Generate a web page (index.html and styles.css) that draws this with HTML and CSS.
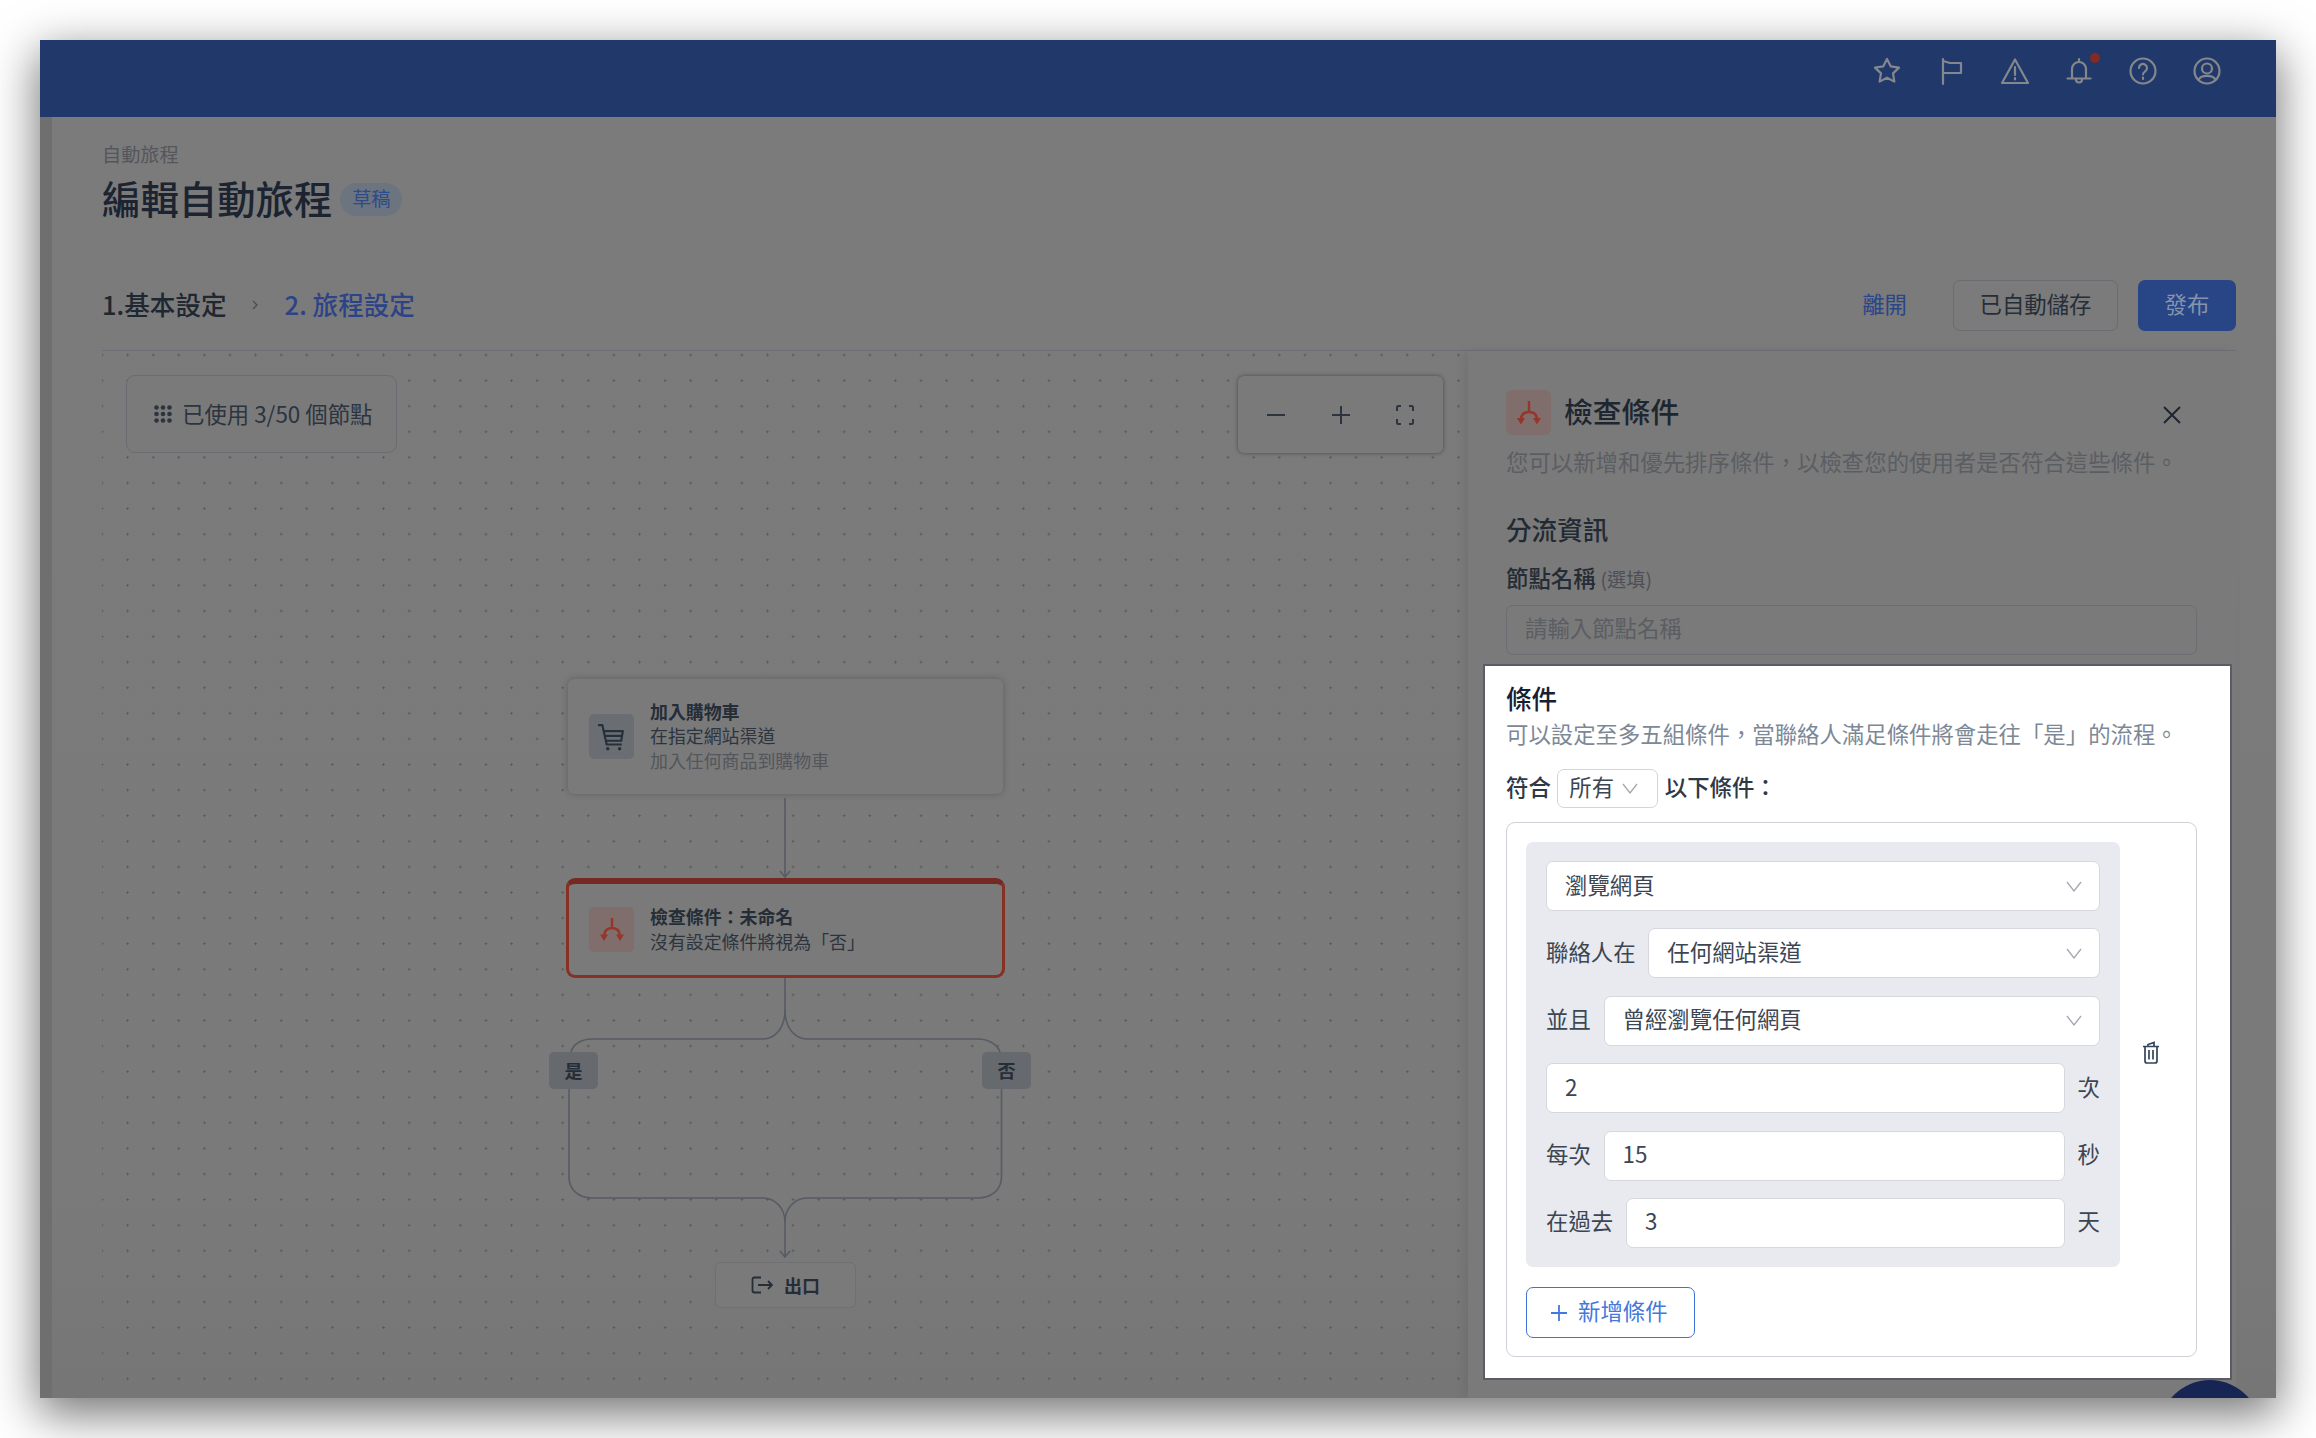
FILE: index.html
```html
<!DOCTYPE html>
<html lang="zh-Hant">
<head>
<meta charset="utf-8">
<title>編輯自動旅程</title>
<link rel="stylesheet" href="styles.css">
</head>
<body>
<div class="window">
  <header class="topbar">
    <svg class="tb-icon" viewBox="0 0 30 30"><path d="M15 3l3.800 7.400 8.200 1.200-6 5.800 1.400 8.200-7.400-3.900-7.400 3.900L9 17.400l-6-5.800 8.200-1.200z"/></svg>
    <svg class="tb-icon" viewBox="0 0 30 30"><path d="M7 3v25M7 5l7 2h11v10H7"/></svg>
    <svg class="tb-icon" viewBox="0 0 30 30"><path d="M15 3.500L28 27H2zM15 11v8M15 22v1.500"/></svg>
    <span class="tb-bell">
      <svg class="tb-icon" viewBox="0 0 30 30"><path d="M8 22v-9a7 7 0 0 1 14 0v9M3.500 22.500h23M15 3v3M12 23.500a3 3 0 0 0 6 0"/></svg>
      <span class="tb-dot"></span>
    </span>
    <svg class="tb-icon" viewBox="0 0 30 30"><circle cx="15" cy="15" r="12.500"/><path d="M11 12a4 4 0 1 1 6.200 3.300c-1.400.9-2.200 1.800-2.200 3.200M15 21.500v1.500"/></svg>
    <svg class="tb-icon" viewBox="0 0 30 30"><circle cx="15" cy="15" r="12.500"/><circle cx="15" cy="12.500" r="5"/><path d="M6.500 24c2-5.500 15-5.500 17 0"/></svg>
  </header>

  <div class="body">
    <div class="sliver"></div>
    <main class="content">
      <div class="crumb">自動旅程</div>
      <div class="title-row">
        <h1 class="title">編輯自動旅程</h1>
        <span class="badge">草稿</span>
      </div>
      <div class="steps-row">
        <div class="steps">
          <span class="step-done">1.基本設定</span>
          <svg class="step-sep" viewBox="0 0 8 12"><path d="M2 2l4 4-4 4"/></svg>
          <span class="step-now">2. 旅程設定</span>
        </div>
        <div class="actions">
          <span class="leave">離開</span>
          <span class="btn-saved">已自動儲存</span>
          <span class="btn-publish">發布</span>
        </div>
      </div>

      <div class="workspace">
        <section class="canvas">
          <svg class="edges" viewBox="102 351 1366 1047">
            <path d="M785 798V876M780 871l5 6 5-6"/>
            <path d="M785 977v33c0 18-10 29-22 29H592c-10 0-19 5-21 13"/>
            <path d="M785 1010c0 18 10 29 22 29h171c10 0 19 5 22 13"/>
            <path d="M569 1089v88c0 13 10 21 23 21h171c12 0 22 10 22 24v35M780 1251l5 6 5-6"/>
            <path d="M1001.500 1089v88c0 13-10.500 21-23.500 21H807c-12 0-22 10-22 24"/>
          </svg>

          <div class="counter">
            <svg class="grid-ic" viewBox="0 0 18 18"><circle cx="2.500" cy="2.500" r="2.300"/><circle cx="9" cy="2.500" r="2.300"/><circle cx="15.500" cy="2.500" r="2.300"/><circle cx="2.500" cy="9" r="2.300"/><circle cx="9" cy="9" r="2.300"/><circle cx="15.500" cy="9" r="2.300"/><circle cx="2.500" cy="15.500" r="2.300"/><circle cx="9" cy="15.500" r="2.300"/><circle cx="15.500" cy="15.500" r="2.300"/></svg>
            <span>已使用 3/50 個節點</span>
          </div>

          <div class="zoombox">
            <svg class="zoom-ic" viewBox="0 0 20 20"><path d="M1 10h18"/></svg>
            <svg class="zoom-ic" viewBox="0 0 20 20"><path d="M1 10h18M10 1v18"/></svg>
            <svg class="zoom-ic" viewBox="0 0 20 20"><path d="M2 6V2.500Q2 1 3.500 1H6M14 1h2.500Q18 1 18 2.500V6M18 14v3.500q0 1.500-1.500 1.500H14M6 19H3.500Q2 19 2 17.500V14"/></svg>
          </div>

          <div class="node node-cart">
            <span class="node-ic ic-gray">
              <svg class="cart-ic" viewBox="0 0 26 26"><path d="M1 2h4l4 18h14M6.500 7.500H24l-1.500 9H8.500M8 12h15.500"/><circle cx="10" cy="24" r="1.600"/><circle cx="21" cy="24" r="1.600"/></svg>
            </span>
            <div class="node-text">
              <div class="node-name">加入購物車</div>
              <div class="node-line">在指定網站渠道</div>
              <div class="node-muted">加入任何商品到購物車</div>
            </div>
          </div>

          <div class="node node-check">
            <span class="node-ic ic-red">
              <svg class="split-ic" viewBox="0 0 26 26"><path class="split-line" d="M13 1v10M13 11c-5 0-8 3-8 9M13 11c5 0 8 3 8 9"/><path class="split-head" d="M1 17.500h8l-4 6.500zM17 17.500h8l-4 6.500z"/></svg>
            </span>
            <div class="node-text">
              <div class="node-name">檢查條件：未命名</div>
              <div class="node-line">沒有設定條件將視為「否」</div>
            </div>
          </div>

          <span class="branch branch-yes">是</span>
          <span class="branch branch-no">否</span>

          <div class="exit-node">
            <svg class="exit-ic" viewBox="0 0 22 18"><path d="M10 1.500H3.500q-2 0-2 2v11q0 2 2 2H10M7 9h14M17 5l4 4-4 4"/></svg>
            <span>出口</span>
          </div>
        </section>

        <aside class="panel">
          <div class="panel-head">
            <div class="panel-title-wrap">
              <span class="panel-ic">
                <svg class="split-ic" viewBox="0 0 26 26"><path class="split-line" d="M13 1v11M13 12c-5 0-8 3-8 8M13 12c5 0 8 3 8 8"/><path class="split-head" d="M1 18h8l-4 6.500zM17 18h8l-4 6.500z"/></svg>
              </span>
              <h2 class="panel-title">檢查條件</h2>
            </div>
            <svg class="close-ic" viewBox="0 0 20 20"><path d="M2 2l16 16M18 2L2 18"/></svg>
          </div>
          <p class="panel-desc">您可以新增和優先排序條件，以檢查您的使用者是否符合這些條件。</p>
          <h3 class="panel-sub">分流資訊</h3>
          <div class="panel-label">節點名稱 <span class="optional">(選填)</span></div>
          <div class="name-input">請輸入節點名稱</div>

          <section class="focus">
            <h3 class="focus-title">條件</h3>
            <p class="focus-desc">可以設定至多五組條件，當聯絡人滿足條件將會走往「是」的流程。</p>
            <div class="match-row">
              <span class="match-text">符合</span>
              <span class="match-select">所有
                <svg class="chev" viewBox="0 0 16 11"><path d="M1 1l7 9 7-9"/></svg>
              </span>
              <span class="match-text">以下條件：</span>
            </div>
            <div class="rules">
              <div class="rule-line">
                <div class="group">
                  <div class="row">
                    <div class="field">瀏覽網頁<svg class="chev" viewBox="0 0 16 11"><path d="M1 1l7 9 7-9"/></svg></div>
                  </div>
                  <div class="row">
                    <span class="lab">聯絡人在</span>
                    <div class="field">任何網站渠道<svg class="chev" viewBox="0 0 16 11"><path d="M1 1l7 9 7-9"/></svg></div>
                  </div>
                  <div class="row">
                    <span class="lab">並且</span>
                    <div class="field">曾經瀏覽任何網頁<svg class="chev" viewBox="0 0 16 11"><path d="M1 1l7 9 7-9"/></svg></div>
                  </div>
                  <div class="row">
                    <div class="field">2</div>
                    <span class="lab">次</span>
                  </div>
                  <div class="row">
                    <span class="lab">每次</span>
                    <div class="field">15</div>
                    <span class="lab">秒</span>
                  </div>
                  <div class="row">
                    <span class="lab">在過去</span>
                    <div class="field">3</div>
                    <span class="lab">天</span>
                  </div>
                </div>
                <div class="trash-col">
                  <svg class="trash-ic" viewBox="0 0 18 23"><path d="M1 5.500h16M6 5.500V3.500L12 1.500v4M3 5.500V20q0 2 2 2h8q2 0 2-2V5.500M7 9v9.500M11 9v9.500"/></svg>
                </div>
              </div>
              <div class="add-btn">
                <svg class="plus-ic" viewBox="0 0 18 18"><path d="M1 9h16M9 1v16"/></svg>
                <span class="add-text">新增條件</span>
              </div>
            </div>
          </section>
        </aside>
      </div>
    </main>
  </div>
  <span class="fab"></span>
</div>
</body>
</html>
```
FILE: styles.css
```css
* { box-sizing: border-box; }
html, body { margin: 0; padding: 0; background: #fff; }
body {
  width: 2316px;
  height: 1438px;
  padding: 40px;
  overflow: hidden;
  font-family: "Noto Sans CJK TC", "Noto Sans", sans-serif;
  color: #2a323d;
}
h1, h2, h3, p { margin: 0; font-weight: 500; }

.window {
  position: relative;
  width: 2236px;
  height: 1358px;
  display: flex;
  flex-direction: column;
  overflow: hidden;
  background: linear-gradient(#7b7b7b, #7a7a7a 85%, #767676);
  box-shadow: 0 14px 44px 2px rgba(0, 0, 0, .55);
}

.topbar {
  flex: none;
  height: 77px;
  padding: 16px 54px 0 0;
  display: flex;
  justify-content: flex-end;
  align-items: flex-start;
  gap: 34px;
  background: #21386b;
}
.tb-icon {
  display: block;
  width: 30px;
  height: 30px;
  fill: none;
  stroke: #84878c;
  stroke-width: 2.200;
  stroke-linecap: round;
  stroke-linejoin: round;
}
.tb-bell { position: relative; display: block; }
.tb-dot {
  position: absolute;
  left: 26px;
  top: -3px;
  width: 10px;
  height: 10px;
  border-radius: 50%;
  background: #842a22;
}

.body { flex: 1; display: flex; min-height: 0; }
.sliver { flex: none; width: 12px; background: #6f6f6f; }
.content {
  flex: 1;
  min-width: 0;
  display: flex;
  flex-direction: column;
  padding: 24px 40px 0 50px;
}

.crumb { font-size: 19.200px; line-height: 26px; color: #53565a; }
.title-row { margin-top: 7px; height: 50px; display: flex; align-items: center; gap: 8px; }
.title { padding-bottom: 4px; font-size: 38.400px; line-height: 50px; color: #1b2430; }
.badge {
  width: 62px;
  height: 33px;
  border-radius: 17px;
  background: #6c7480;
  color: #2c4a8d;
  font-size: 19.200px;
  line-height: 31px;
  text-align: center;
}

.steps-row {
  flex: none;
  margin-top: 56px;
  height: 71px;
  padding-bottom: 19px;
  display: flex;
  justify-content: space-between;
  align-items: stretch;
  border-bottom: 1.500px solid #6c6f75;
}
.steps { display: flex; align-items: center; padding-bottom: 5px; font-size: 25.600px; font-weight: 500; }
.step-done { color: #1f2731; }
.step-sep { width: 8px; height: 12px; margin: 3px 26px 0 24px; fill: none; stroke: #4a4d52; stroke-width: 1.300; }
.step-now { color: #2c4487; }
.actions { display: flex; align-items: center; font-size: 22.400px; }
.leave { color: #2a4689; margin: 0 46px 5px 0; }
.btn-saved {
  width: 165px;
  height: 51px;
  margin-right: 20px;
  border: 1.500px solid #696c71;
  border-radius: 7px;
  color: #262e38;
  line-height: 44px;
  text-align: center;
}
.btn-publish {
  width: 98px;
  height: 51px;
  border-radius: 7px;
  background: #284585;
  color: #8793ad;
  line-height: 46px;
  text-align: center;
}

.workspace { flex: 1; min-height: 0; display: flex; }

.canvas {
  position: relative;
  flex: none;
  width: 1366px;
  background-image: radial-gradient(circle at 1.500px 1.500px, #585858 .9px, transparent 1.300px);
  background-size: 25.600px 25.600px;
  background-position: -1.500px 2.500px;
}
.edges {
  position: absolute;
  left: 0;
  top: 0;
  width: 1366px;
  height: 1047px;
  fill: none;
  stroke: #575b63;
  stroke-width: 1.600;
}
.counter {
  position: absolute;
  left: 24px;
  top: 24px;
  width: 271px;
  height: 78px;
  padding: 0 0 3px 27px;
  display: flex;
  align-items: center;
  gap: 10px;
  border: 1.500px solid #696c71;
  border-radius: 9px;
  background: #7a7a7a;
  font-size: 22.400px;
  color: #2c343f;
}
.grid-ic { width: 18px; height: 18px; margin-top: 3px; fill: #2c343f; }
.zoombox {
  position: absolute;
  left: 1136px;
  top: 25px;
  width: 205px;
  height: 77px;
  padding: 0 28px;
  display: flex;
  align-items: center;
  justify-content: space-between;
  border-radius: 6px;
  background: #7a7a7a;
  box-shadow: 0 0 4px rgba(0, 0, 0, .4);
}
.zoom-ic { width: 20px; height: 20px; fill: none; stroke: #2c343f; stroke-width: 2; }

.node {
  position: absolute;
  display: flex;
  align-items: center;
  gap: 16px;
  background: #7a7a7a;
}
.node-cart {
  left: 466px;
  top: 328px;
  width: 435px;
  height: 115px;
  padding-left: 21px;
  border-radius: 6px;
  box-shadow: 0 0 7px rgba(0, 0, 0, .22);
}
.node-check {
  left: 464px;
  top: 527px;
  width: 439px;
  height: 100px;
  padding-left: 20px;
  border: 3px solid #863026;
  border-top: 6px solid #742a22;
  border-radius: 9px;
}
.node-ic { flex: none; width: 45px; height: 45px; display: flex; align-items: center; justify-content: center; border-radius: 5px; }
.ic-gray { background: #6a6e73; }
.ic-red { background: #7f6e6b; }
.cart-ic { width: 28px; height: 28px; margin-right: 2px; fill: none; stroke: #26303b; stroke-width: 2; stroke-linejoin: round; }
.cart-ic circle { fill: #26303b; stroke: none; }
.split-ic { width: 26px; height: 26px; }
.split-line { fill: none; stroke: #96352a; stroke-width: 2.400; }
.split-head { fill: #96352a; }
.node-text { padding-bottom: 2px; font-size: 17.920px; line-height: 24.500px; color: #2d343e; }
.node-name { font-weight: 700; color: #252d37; }
.node-muted { color: #53565a; }

.branch {
  position: absolute;
  top: 701px;
  width: 49px;
  height: 37px;
  border-radius: 5px;
  background: #66696d;
  color: #252d37;
  font-size: 18px;
  font-weight: 700;
  line-height: 37px;
  text-align: center;
}
.branch-yes { left: 447px; }
.branch-no { left: 880px; }

.exit-node {
  position: absolute;
  left: 613px;
  top: 911px;
  width: 141px;
  height: 46px;
  display: flex;
  align-items: center;
  justify-content: center;
  gap: 11px;
  border: 1.500px solid #6e7074;
  border-radius: 6px;
  background: #7a7a7a;
  font-size: 18px;
  font-weight: 700;
  color: #252d37;
}
.exit-ic { width: 22px; height: 18px; fill: none; stroke: #252d37; stroke-width: 1.800; }

.panel {
  flex: 1;
  min-width: 0;
  padding: 39px 0 0 38px;
  background: #7a7a7a;
  box-shadow: -4px 0 10px rgba(0, 0, 0, .07);
  z-index: 1;
}
.panel-head { width: 691px; height: 45px; padding-right: 15px; display: flex; align-items: center; justify-content: space-between; }
.panel-title-wrap { display: flex; align-items: center; gap: 13px; }
.panel-ic { width: 45px; height: 45px; display: flex; align-items: center; justify-content: center; border-radius: 6px; background: #7f6e6b; }
.panel-title { padding-bottom: 3px; font-size: 28.800px; line-height: 40px; color: #1e2630; }
.close-ic { width: 20px; height: 20px; margin-top: 4px; fill: none; stroke: #1e2630; stroke-width: 2; }
.panel-desc { margin-top: 11px; font-size: 22.400px; font-weight: 400; line-height: 30px; color: #5a5e63; white-space: nowrap; }
.panel-sub { margin-top: 36px; font-size: 25.600px; line-height: 34px; color: #222a34; }
.panel-label { margin-top: 16px; font-size: 22.400px; font-weight: 500; line-height: 30px; color: #252c36; }
.optional { font-size: 19.200px; font-weight: 400; color: #4c5056; }
.name-input {
  width: 691px;
  height: 50px;
  margin-top: 11px;
  padding-left: 18px;
  border: 1.500px solid #6a6d72;
  border-radius: 7px;
  font-size: 22.400px;
  line-height: 42px;
  color: #5a5e63;
}

.focus {
  width: 745px;
  height: 712px;
  margin: 11px 0 0 -21px;
  padding: 15px 34px 0 21px;
  background: #fff;
  box-shadow: 0 0 0 2px #5b5d66;
}
.focus-title { font-size: 25.600px; line-height: 34px; color: #172033; }
.focus-desc { margin-top: 3px; font-size: 22.400px; font-weight: 400; line-height: 30px; color: #7d8896; white-space: nowrap; }
.match-row { margin-top: 21px; height: 39px; display: flex; align-items: center; gap: 6.500px; font-size: 22.400px; font-weight: 500; color: #2e3846; }
.match-text { padding-bottom: 5px; }
.match-select {
  width: 101px;
  height: 39px;
  padding: 0 19px 5px 11px;
  display: flex;
  align-items: center;
  justify-content: space-between;
  border: 1.500px solid #d2d5da;
  border-radius: 7px;
  font-weight: 400;
  color: #3c4653;
}
.chev { flex: none; width: 16px; height: 11px; margin-top: 5px; fill: none; stroke: #a3a8b0; stroke-width: 1.300; }

.rules {
  width: 691px;
  height: 535px;
  margin-top: 14px;
  padding: 19px 0 0 19px;
  border: 1.500px solid #ced1d6;
  border-radius: 9px;
}
.rule-line { display: flex; }
.group {
  flex: none;
  width: 594px;
  height: 425px;
  padding: 19px 20px;
  display: flex;
  flex-direction: column;
  gap: 17.400px;
  border-radius: 7px;
  background: #e8eaef;
}
.row { height: 50px; display: flex; align-items: center; gap: 12.800px; }
.lab { flex: none; padding-bottom: 5px; font-size: 22.400px; color: #3c4653; }
.field {
  flex: 1;
  min-width: 0;
  height: 50px;
  padding: 0 17px 5px 18px;
  display: flex;
  align-items: center;
  justify-content: space-between;
  border: 1.500px solid #d6d8dd;
  border-radius: 7px;
  background: #fff;
  font-size: 22.400px;
  color: #3c4653;
}
.trash-col { flex: 1; display: flex; align-items: center; justify-content: center; padding: 0 14px 4px 0; }
.trash-ic { width: 18px; height: 23px; fill: none; stroke: #34445a; stroke-width: 1.700; }

.add-btn {
  width: 169px;
  height: 51px;
  margin-top: 20px;
  padding-left: 23px;
  display: flex;
  align-items: center;
  gap: 10px;
  border: 1.500px solid #3f72d6;
  border-radius: 7px;
  font-size: 22.400px;
  color: #4478dc;
}
.add-text { padding-bottom: 5px; }
.plus-ic { width: 18px; height: 18px; fill: none; stroke: #4478dc; stroke-width: 1.800; }

.fab {
  position: absolute;
  left: 2119px;
  top: 1340px;
  width: 102px;
  height: 102px;
  border-radius: 50%;
  background: #172554;
  z-index: 2;
}
```
